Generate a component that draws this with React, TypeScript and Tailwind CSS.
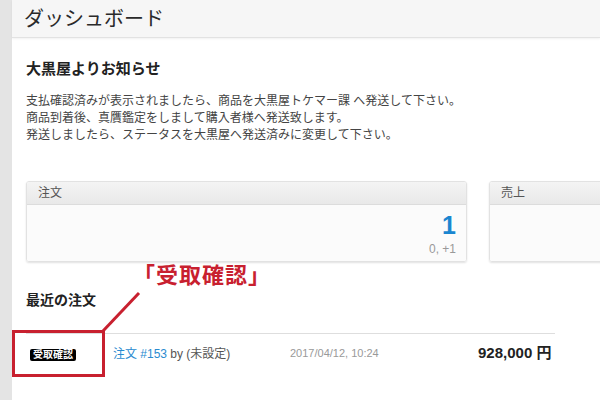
const jp = { fontFamily: '"Liberation Sans", "Noto Sans CJK JP", sans-serif' }

function StatCard({ title, value, sub, className }: { title: string; value?: string; sub?: string; className: string }) {
  return (
    <div className={`shrink-0 rounded-[3px] border border-[#e2e2e2] shadow-[0_1px_2px_rgba(0,0,0,0.12)] overflow-hidden ${className}`}>
      <div className="h-[23px] bg-gradient-to-b from-[#f4f4f4] to-[#e9e9e9] border-b border-[#dcdcdc] px-[11px] flex items-center text-[12px] text-[#555]">
        {title}
      </div>
      <div className="h-[56px] bg-[#fbfbfb] flex flex-col items-end pr-[10px] pt-[6px]">
        {value && <div className="text-[25px] leading-[28px] font-bold text-[#1a86d0]">{value}</div>}
        {sub && <div className="text-[12px] text-[#999] mt-[1px]">{sub}</div>}
      </div>
    </div>
  )
}

export default function App() {
  return (
    <div className="relative w-[600px] h-[400px] overflow-hidden flex bg-white text-[#333]" style={jp}>
      <div className="w-[12px] shrink-0 bg-[#e4e4e4]" />
      <div className="flex-1 flex flex-col min-w-0">
        <div className="h-[38px] shrink-0 bg-[#f6f6f6] border-b border-[#e2e2e2] shadow-[0_1px_2px_rgba(0,0,0,0.06)] flex items-center px-[12px]">
          <h1 className="text-[20px] text-[#2a2a2a]">ダッシュボード</h1>
        </div>
        <div className="px-[14px] pt-[21px]">
          <h2 className="text-[15px] font-bold text-[#222] leading-[20px]">大黒屋よりお知らせ</h2>
          <div className="mt-[14px] text-[12px] leading-[17px] text-[#444]">
            <p>支払確認済みが表示されましたら、商品を大黒屋トケマー課 へ発送して下さい。</p>
            <p>商品到着後、真贋鑑定をしまして購入者様へ発送致します。</p>
            <p>発送しましたら、ステータスを大黒屋へ発送済みに変更して下さい。</p>
          </div>
          <div className="flex gap-[22px] mt-[37px] -mr-[40px]">
            <StatCard className="w-[441px]" title="注文" value="1" sub="0, +1" />
            <StatCard className="w-[200px]" title="売上" />
          </div>
          <h2 className="mt-[29px] text-[14px] font-bold text-[#222] leading-[18px]">最近の注文</h2>
          <div className="mt-[24px] w-[529px] border-t border-[#dedede] flex items-center h-[40px] text-[12px]">
            <div className="w-[87px] pl-[4px] shrink-0">
              <span className="inline-block bg-black text-white text-[10px] font-bold leading-[12px] px-[3px] rounded-[2px]">受取確認</span>
            </div>
            <div className="w-[177px] shrink-0">
              <span className="text-[#2a8bd0]">注文 #153</span>
              <span className="text-[#555]"> by (未設定)</span>
            </div>
            <div className="w-[188px] shrink-0 text-[11px] text-[#999]">2017/04/12, 10:24</div>
            <div className="text-[15px] font-semibold text-[#222]">928,000 円</div>
          </div>
        </div>
      </div>

      {/* annotation overlay */}
      <div className="absolute left-[12px] top-[330px] w-[93px] h-[47px] border-[3px] border-[#c8202f]" />
      <svg className="absolute left-0 top-0 pointer-events-none" width="600" height="400">
        <line x1="103" y1="331" x2="139" y2="293" stroke="#c8202f" strokeWidth="3" />
      </svg>
      <div className="absolute left-[133px] top-[262px] text-[22px] font-bold text-[#c8202f] leading-[28px] tracking-[1px]">「受取確認」</div>
    </div>
  )
}
